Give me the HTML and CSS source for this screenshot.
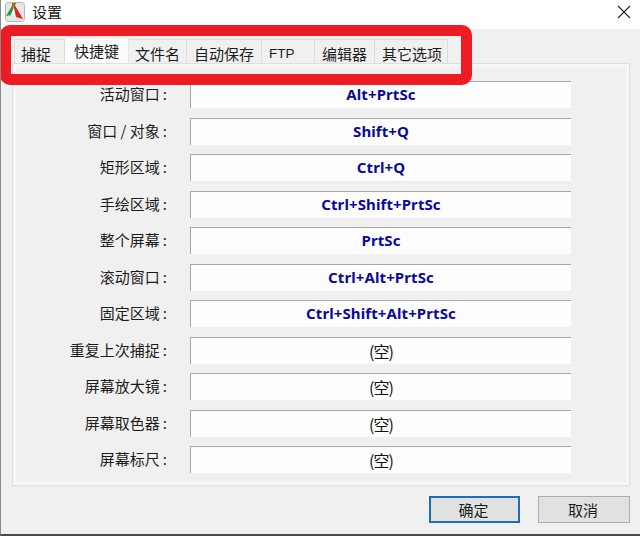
FILE: index.html
```html
<!DOCTYPE html>
<html lang="zh-CN">
<head>
    <meta charset="UTF-8">
    <meta name="viewport" content="width=device-width, initial-scale=1.0">
    <title>设置</title>
    <link rel="stylesheet" href="styles.css">
</head>
<body>
    <div class="titlebar">
        <svg class="app-icon" width="20" height="20" viewBox="0 0 20 20">
            <rect x="0.5" y="0.5" width="19" height="19" rx="3" fill="#e6e6e6" stroke="#b4b4b4"/>
            <path d="M8 2 L1 14 L6 13 L9 6 Z" fill="#2c9a3e"/>
            <path d="M9 5 L6 13 L11 15 Z" fill="#fdfdfd"/>
            <path d="M9 2 L18 17 L11 15 L9 6 Z" fill="#d8261c"/>
            <path d="M7 1 L11 1 L10 4 L7 4 Z" fill="#a86a20"/>
        </svg>
        <span class="title">设置</span>
        <svg class="close" width="14" height="14" viewBox="0 0 14 14">
            <path d="M1 1 L13 13 M13 1 L1 13" stroke="#222" stroke-width="1.1" fill="none"/>
        </svg>
    </div>

    <div class="tabs">
        <div class="tab tab-1">捕捉</div>
        <div class="tab tab-2 active">快捷键</div>
        <div class="tab tab-3">文件名</div>
        <div class="tab tab-4">自动保存</div>
        <div class="tab tab-5 ftp">FTP</div>
        <div class="tab tab-6">编辑器</div>
        <div class="tab tab-7">其它选项</div>
    </div>

    <div class="panel">
        <div class="row"><span class="label">活动窗口<i class="colon">:</i></span><div class="field">Alt+PrtSc</div></div>
        <div class="row"><span class="label">窗口 / 对象<i class="colon">:</i></span><div class="field">Shift+Q</div></div>
        <div class="row"><span class="label">矩形区域<i class="colon">:</i></span><div class="field">Ctrl+Q</div></div>
        <div class="row"><span class="label">手绘区域<i class="colon">:</i></span><div class="field">Ctrl+Shift+PrtSc</div></div>
        <div class="row"><span class="label">整个屏幕<i class="colon">:</i></span><div class="field">PrtSc</div></div>
        <div class="row"><span class="label">滚动窗口<i class="colon">:</i></span><div class="field">Ctrl+Alt+PrtSc</div></div>
        <div class="row"><span class="label">固定区域<i class="colon">:</i></span><div class="field">Ctrl+Shift+Alt+PrtSc</div></div>
        <div class="row"><span class="label">重复上次捕捉<i class="colon">:</i></span><div class="field empty">(空)</div></div>
        <div class="row"><span class="label">屏幕放大镜<i class="colon">:</i></span><div class="field empty">(空)</div></div>
        <div class="row"><span class="label">屏幕取色器<i class="colon">:</i></span><div class="field empty">(空)</div></div>
        <div class="row"><span class="label">屏幕标尺<i class="colon">:</i></span><div class="field empty">(空)</div></div>
    </div>

    <div class="footer">
        <div class="btn primary">确定</div>
        <div class="btn">取消</div>
    </div>

    <div class="highlight"></div>
</body>
</html>
```

FILE: styles.css
```css
html, body {
    margin: 0;
    padding: 0;
}
body {
    width: 640px;
    height: 536px;
    overflow: hidden;
    position: relative;
    box-sizing: border-box;
    background-color: #f0f0f0;
    border-left: 1px solid #8a8a8a;
    border-bottom: 2px solid #4a4a4a;
    font-family: "Noto Sans CJK SC", "Noto Sans", sans-serif;
    font-size: 15px;
    color: #1c1c1c;
}
.titlebar {
    height: 29px;
    background-color: #fff;
    display: flex;
    align-items: center;
    padding: 0 9px 6px 4px;
    box-sizing: border-box;
}
.app-icon {
    margin-right: 7px;
    flex-shrink: 0;
}
.title {
    font-size: 15px;
}
.close {
    margin-left: auto;
}
.tabs {
    display: flex;
    align-items: flex-end;
    height: 24px;
    padding: 10px 0 0 13px;
}
.tab {
    height: 24px;
    line-height: 27px;
    text-align: center;
    background-color: #f0f0f0;
    border: 1px solid #dcdcdc;
    border-bottom: none;
    border-left: none;
    box-sizing: border-box;
    white-space: nowrap;
}
.tab-1 { width: 51px; border-left: 1px solid #dcdcdc; text-align: left; padding-left: 6px; }
.tab-2 { width: 64px; }
.tab-3 { width: 58px; }
.tab-4 { width: 75px; }
.tab-5 { width: 53px; }
.tab-6 { width: 60px; }
.tab-7 { width: 73px; text-align: left; padding-left: 7px; }
.tab.active {
    height: 26px;
    line-height: 25px;
    background-color: #fbfbfb;
    border-color: #e6e6e6;
}
.tab.ftp {
    font-family: "Liberation Sans", sans-serif;
    font-size: 13.5px;
    text-align: left;
    padding-left: 7px;
}
.panel {
    margin: 0 10px 0 11px;
    height: 423px;
    box-sizing: border-box;
    border: 1px solid #dedede;
    outline: 3px solid #f7f7f7;
    outline-offset: -4px;
    padding: 17px 0 0 0;
    display: flex;
    flex-direction: column;
    gap: 9.5px;
}
.row {
    display: flex;
    align-items: center;
    height: 27px;
}
.label {
    width: 154px;
    text-align: right;
    white-space: nowrap;
    margin-top: -2px;
}
.colon {
    font-style: normal;
    margin-left: 3px;
}
.field {
    margin-left: 23px;
    width: 381px;
    height: 27px;
    line-height: 25px;
    box-sizing: border-box;
    background-color: #fdfdfd;
    border-top: 1px solid #a8a8a8;
    border-left: 1px solid #a8a8a8;
    text-align: center;
    font-family: "Noto Sans", sans-serif;
    font-weight: 700;
    font-size: 15px;
    letter-spacing: 0.1px;
    color: #0a0a9c;
}
.field.empty {
    font-family: "Noto Sans CJK SC", sans-serif;
    font-weight: 400;
    font-size: 16px;
    letter-spacing: -1px;
    line-height: 26px;
    color: #111;
}
.footer {
    display: flex;
    justify-content: flex-end;
    gap: 18px;
    padding: 10px 10px 0 0;
}
.btn {
    width: 92px;
    height: 27px;
    line-height: 25px;
    box-sizing: border-box;
    text-align: center;
    padding-right: 2px;
    background-color: #e1e1e1;
    border: 1px solid #adadad;
}
.btn.primary {
    width: 91px;
    border: 2px solid #1a6fbd;
    line-height: 23px;
}
.highlight {
    position: absolute;
    left: -1px;
    top: 25px;
    width: 472px;
    height: 60px;
    box-sizing: border-box;
    border: 11px solid #ed1c24;
    border-radius: 10px;
}
```
